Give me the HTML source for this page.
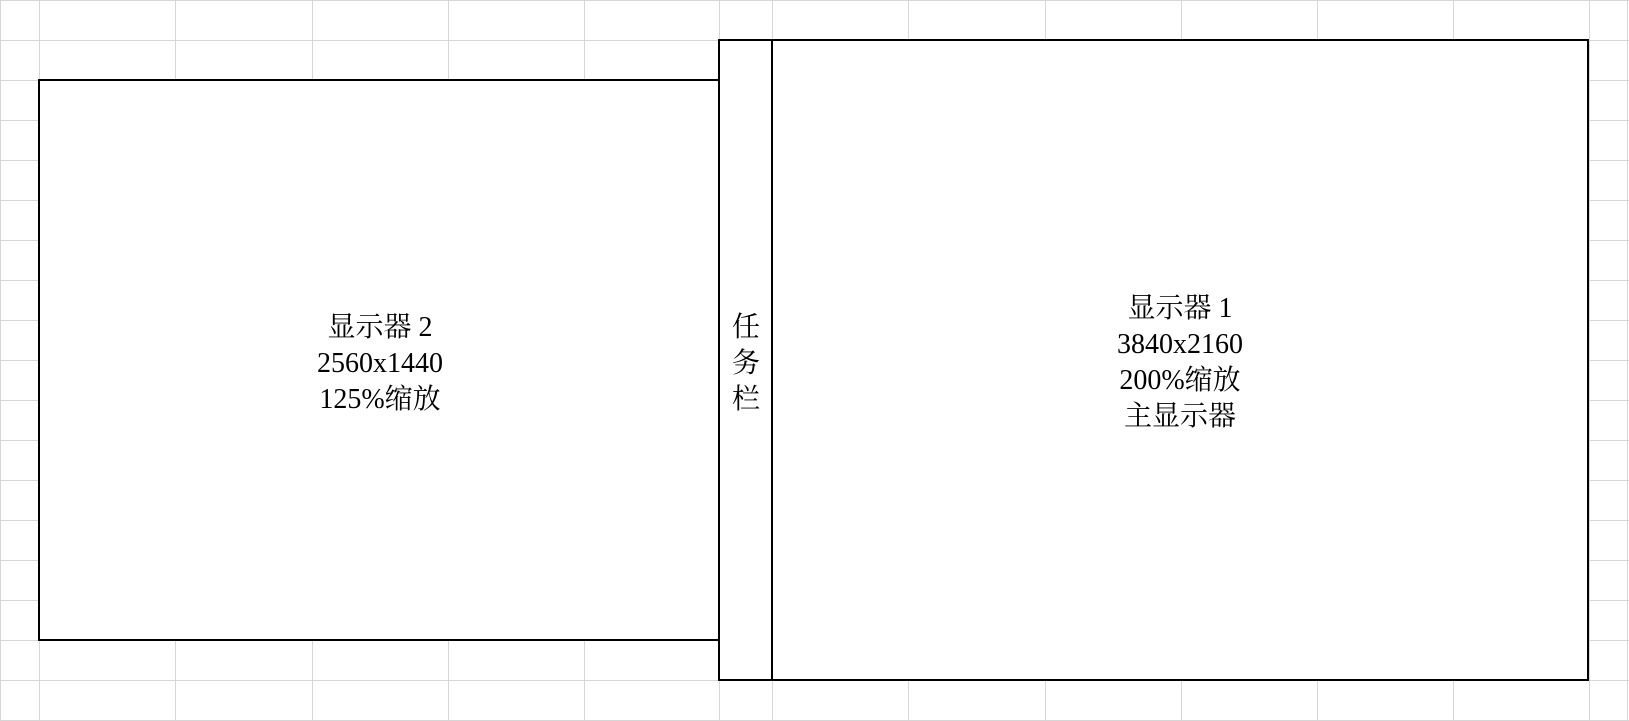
<!DOCTYPE html>
<html><head><meta charset="utf-8"><style>
html,body{margin:0;padding:0;background:#fff;width:1629px;height:721px;overflow:hidden;position:relative}
.v{position:absolute;top:0;width:1px;height:721px;background:#d6d6d6}
.h{position:absolute;left:0;height:1px;width:1629px;background:#d6d6d6}
.b{position:absolute;background:#fff;border:2px solid #000;box-sizing:border-box}
.t{position:absolute;font-family:"Liberation Serif","Noto Serif CJK SC",serif;font-size:28px;line-height:36px;color:#000;text-align:center;white-space:nowrap}
</style></head><body>
<div class="v" style="left:0"></div><div class="v" style="left:39px"></div><div class="v" style="left:175px"></div><div class="v" style="left:312px"></div><div class="v" style="left:448px"></div><div class="v" style="left:584px"></div><div class="v" style="left:719px"></div><div class="v" style="left:772px"></div><div class="v" style="left:908px"></div><div class="v" style="left:1045px"></div><div class="v" style="left:1181px"></div><div class="v" style="left:1317px"></div><div class="v" style="left:1453px"></div><div class="v" style="left:1589px"></div><div class="v" style="left:1627px"></div>
<div class="h" style="top:0"></div><div class="h" style="top:40px"></div><div class="h" style="top:80px"></div><div class="h" style="top:120px"></div><div class="h" style="top:160px"></div><div class="h" style="top:200px"></div><div class="h" style="top:240px"></div><div class="h" style="top:280px"></div><div class="h" style="top:320px"></div><div class="h" style="top:360px"></div><div class="h" style="top:400px"></div><div class="h" style="top:440px"></div><div class="h" style="top:480px"></div><div class="h" style="top:520px"></div><div class="h" style="top:560px"></div><div class="h" style="top:600px"></div><div class="h" style="top:640px"></div><div class="h" style="top:680px"></div><div class="h" style="top:720px"></div>
<div class="b" style="left:38px;top:79px;width:683px;height:562px"></div>
<div class="b" style="left:718px;top:39px;width:871px;height:642px"></div>
<div style="position:absolute;left:771px;top:40px;width:2px;height:640px;background:#000"></div>
<div class="t" style="left:230px;width:300px;top:310px">显示器 2<br>2560x1440<br>125%缩放</div>
<div class="t" style="left:720px;width:52px;top:310px">任<br>务<br>栏</div>
<div class="t" style="left:1030px;width:300px;top:291px">显示器 1<br>3840x2160<br>200%缩放<br>主显示器</div>
</body></html>
